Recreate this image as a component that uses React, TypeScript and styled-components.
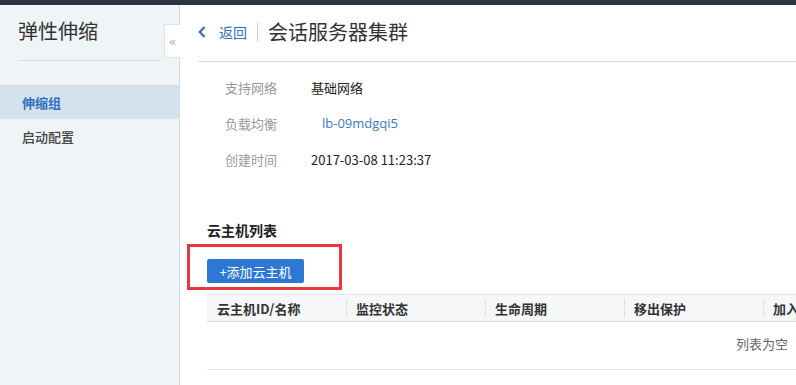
import React from "react";
import styled, { createGlobalStyle } from "styled-components";

const Global = createGlobalStyle`
  html, body { margin: 0; padding: 0; background: #fff; overflow: hidden; }
  body { font-family: "Microsoft YaHei", "Noto Sans CJK SC", "Noto Sans", sans-serif; color: #333; }
  * { box-sizing: border-box; }
`;

const Page = styled.div`
  width: 796px;
  height: 385px;
  display: flex;
  flex-direction: column;
  overflow: hidden;
`;

const TopBar = styled.div`
  height: 5px;
  background: #2c3541;
  flex: none;
`;

const Body = styled.div`
  flex: 1;
  display: flex;
  min-height: 0;
`;

const Sidebar = styled.aside`
  position: relative;
  width: 180px;
  flex: none;
  background: #eff4f7;
  border-right: 1px solid #d5dde5;
`;

const SideTitle = styled.div`
  margin: 0 19px 0 18px;
  height: 56px;
  display: flex;
  align-items: center;
  font-size: 20px;
  color: #333;
  border-bottom: 1px solid #d9dfe4;
  padding-bottom: 4px;
`;

const Menu = styled.nav`
  margin-top: 24px;
  display: flex;
  flex-direction: column;
`;

const MenuItem = styled.div<{ $active?: boolean }>`
  height: 34px;
  display: flex;
  align-items: center;
  padding-left: 22px;
  font-size: 13px;
  font-weight: ${(p) => (p.$active ? 600 : 500)};
  color: ${(p) => (p.$active ? "#2f6fbf" : "#444")};
  background: ${(p) => (p.$active ? "#d5e2ee" : "transparent")};
`;

const Collapse = styled.div`
  position: absolute;
  top: 19px;
  right: -1px;
  width: 16px;
  height: 34px;
  background: #fff;
  border: 1px solid #dde3e8;
  border-right: none;
  display: flex;
  align-items: center;
  justify-content: center;
  color: #a8aeb4;
  font-size: 13px;
  font-family: "DejaVu Sans", sans-serif;
`;

const Main = styled.main`
  flex: 1;
  min-width: 0;
  padding-left: 18px;
  overflow: hidden;
`;

const Header = styled.div`
  height: 57px;
  display: flex;
  align-items: center;
  border-bottom: 1px solid #d8d8d8;
  padding-bottom: 3px;
`;

const Back = styled.span`
  display: flex;
  align-items: center;
  color: #2f6fbf;
  font-size: 14px;
  gap: 13px;
  padding-right: 10px;
  border-right: 1px solid #ccc;
  line-height: 18px;
`;

const PageTitle = styled.h1`
  margin: 0 0 0 10px;
  font-size: 20px;
  font-weight: 400;
  color: #333;
`;

const Info = styled.div`
  padding: 7px 0 0 27px;
  display: flex;
  flex-direction: column;
`;

const InfoRow = styled.div`
  height: 36px;
  display: flex;
  align-items: center;
  font-size: 13px;
`;

const Label = styled.span`
  width: 86px;
  color: #999;
`;

const Value = styled.span<{ $link?: boolean }>`
  color: ${(p) => (p.$link ? "#3b78c4" : "#222")};
  padding-left: ${(p) => (p.$link ? "11px" : "0")};
  font-family: ${(p) => (p.$link ? '"Open Sans", "Noto Sans", sans-serif' : 'inherit')};
`;

const Section = styled.section`
  position: relative;
  margin-top: 43px;
  padding-left: 9px;
`;

const SectionTitle = styled.h2`
  margin: 0;
  font-size: 14px;
  font-weight: 700;
  color: #222;
  line-height: 20px;
`;

const AddButton = styled.button`
  margin-top: 19px;
  width: 97px;
  height: 24px;
  border: none;
  border-radius: 2px;
  background: #2d78d4;
  color: #fff;
  font-family: inherit;
  font-size: 13px;
  padding: 0;
`;

const Highlight = styled.div`
  position: absolute;
  left: -11px;
  top: 24px;
  width: 155px;
  height: 46px;
  border: 3px solid #e5383f;
  pointer-events: none;
`;

const Table = styled.div`
  margin-top: 11px;
`;

const HeadRow = styled.div`
  display: grid;
  grid-template-columns: 139px 139px 139px 139px 139px;
  width: 695px;
  height: 28px;
  background: #f6f7f9;
  border-top: 1px solid #e1e4e7;
  border-bottom: 1px solid #d9dcdf;
`;

const HeadCell = styled.div<{ $first?: boolean }>`
  display: flex;
  align-items: center;
  padding-left: 10px;
  font-size: 13px;
  font-weight: 700;
  color: #333;
  position: relative;
  white-space: nowrap;
  &::before {
    content: "";
    display: ${(p) => (p.$first ? "none" : "block")};
    position: absolute;
    left: 0;
    top: 4px;
    bottom: 4px;
    width: 1px;
    background: #dfe2e5;
  }
`;

const Empty = styled.div`
  height: 48px;
  display: flex;
  align-items: center;
  justify-content: flex-end;
  padding: 0 8px 4px 0;
  font-size: 13px;
  color: #666;
  border-bottom: 1px solid #e6e6e6;
`;

const Chevron = () => (
  <svg width="8" height="12" viewBox="0 0 8 12">
    <path d="M6.5 1 L1.8 6 L6.5 11" fill="none" stroke="#2f6fbf" strokeWidth="2.2" />
  </svg>
);

export default function App() {
  const cols = ["云主机ID/名称", "监控状态", "生命周期", "移出保护", "加入时间"];
  return (
    <Page>
      <Global />
      <TopBar />
      <Body>
        <Sidebar>
          <SideTitle>弹性伸缩</SideTitle>
          <Menu>
            <MenuItem $active>伸缩组</MenuItem>
            <MenuItem>启动配置</MenuItem>
          </Menu>
          <Collapse>«</Collapse>
        </Sidebar>
        <Main>
          <Header>
            <Back>
              <Chevron />
              返回
            </Back>
            <PageTitle>会话服务器集群</PageTitle>
          </Header>
          <Info>
            <InfoRow>
              <Label>支持网络</Label>
              <Value>基础网络</Value>
            </InfoRow>
            <InfoRow>
              <Label>负载均衡</Label>
              <Value $link>lb-09mdgqi5</Value>
            </InfoRow>
            <InfoRow>
              <Label>创建时间</Label>
              <Value>2017-03-08 11:23:37</Value>
            </InfoRow>
          </Info>
          <Section>
            <SectionTitle>云主机列表</SectionTitle>
            <AddButton>+添加云主机</AddButton>
            <Highlight />
            <Table>
              <HeadRow>
                {cols.map((c, i) => (
                  <HeadCell key={c} $first={i === 0}>
                    {c}
                  </HeadCell>
                ))}
              </HeadRow>
              <Empty>列表为空</Empty>
            </Table>
          </Section>
        </Main>
      </Body>
    </Page>
  );
}
